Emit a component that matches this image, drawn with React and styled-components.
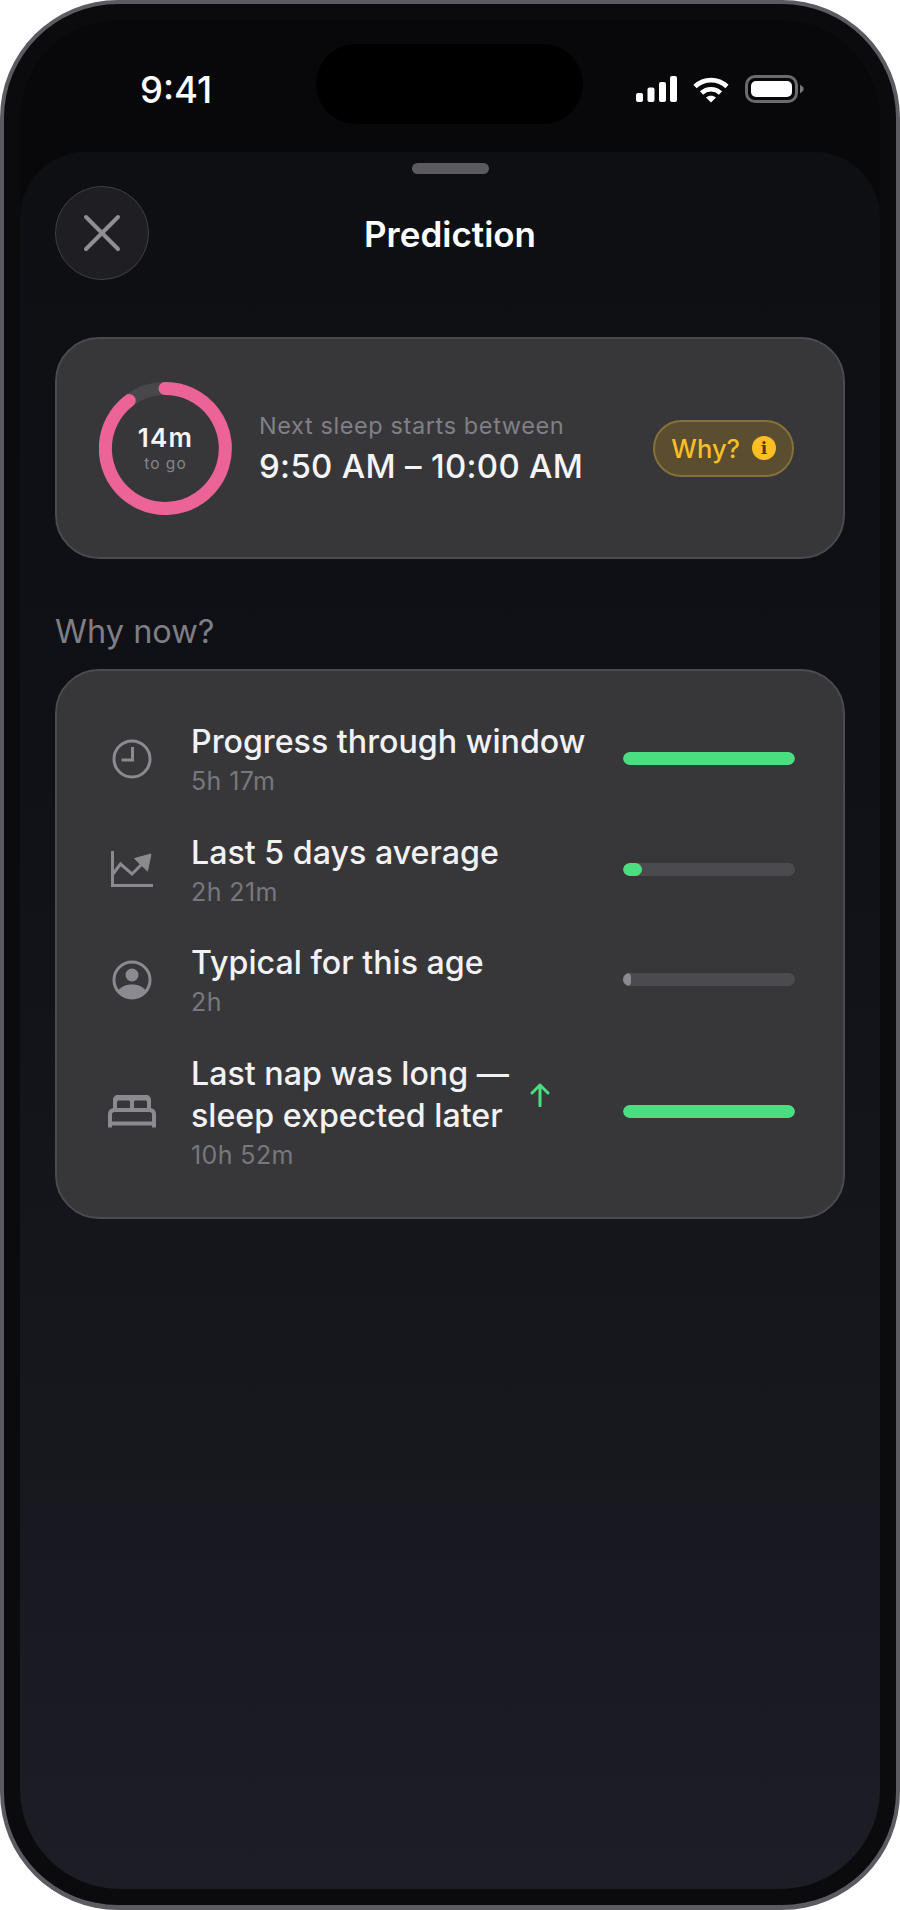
import styled, { createGlobalStyle } from 'styled-components'

const GlobalStyle = createGlobalStyle`
  html, body {
    margin: 0;
    padding: 0;
    background: #fff;
  }
  body {
    font-family: Inter, "Noto Sans", sans-serif;
    -webkit-font-smoothing: antialiased;
  }
`

const Phone = styled.div`
  box-sizing: border-box;
  width: 900px;
  height: 1910px;
  padding: 16px 16px 16px;
  border: 4px solid #5b5b61;
  border-bottom-width: 5px;
  border-radius: 118px;
  background: #0b0b0d;
`
const Screen = styled.div`
  display: flex;
  flex-direction: column;
  height: 100%;
  border-radius: 100px;
  background: #08080b;
  overflow: hidden;
`
const StatusBar = styled.div`
  flex: none;
  display: flex;
  align-items: flex-start;
  height: 132px;
  padding: 24px 75px 0 120px;
  box-sizing: border-box;
`
const Time = styled.div`
  width: 178px;
  margin-top: 26px;
  font-size: 36.5px;
  line-height: 40px;
  font-weight: 500;
  color: #fff;
`
const Island = styled.div`
  flex: none;
  width: 267px;
  height: 80px;
  border-radius: 40px;
  background: #000;
`
const StatusIcons = styled.div`
  display: flex;
  align-items: center;
  gap: 16px;
  margin: 31px 0 0 53px;
`
const Sheet = styled.div`
  flex: 1;
  display: flex;
  flex-direction: column;
  padding: 11px 35px 0;
  border-radius: 66px 66px 0 0;
  background: linear-gradient(180deg, #0e0f13 0%, #101117 35%, #14151b 58%, #1c1d25 100%);
`
const Handle = styled.div`
  align-self: center;
  width: 77px;
  height: 11px;
  border-radius: 6px;
  background: #5a5a60;
`
const Header = styled.div`
  display: grid;
  grid-template-columns: 94px 1fr 94px;
  align-items: center;
  margin-top: 12px;
  margin-bottom: 57px;
`
const CloseButton = styled.div`
  box-sizing: border-box;
  display: flex;
  align-items: center;
  justify-content: center;
  width: 94px;
  height: 94px;
  border: 1.5px solid #3f3f45;
  border-radius: 50%;
  background: #1e1e23;
`
const Title = styled.div`
  padding-top: 1px;
  text-align: center;
  font-size: 35px;
  line-height: 40px;
  font-weight: 600;
  color: #fff;
`
const Card = styled.div`
  box-sizing: border-box;
  width: 790px;
  border: 2px solid #4b4b4f;
  border-radius: 44px;
  background: #37373a;
`
const PredictionCard = styled(Card)`
  display: flex;
  align-items: center;
  height: 222px;
  padding: 0 49px 0 42px;
`
const Ring = styled.div`
  flex: none;
  display: grid;
  width: 133px;
  height: 133px;
  & > * {
    grid-area: 1 / 1;
  }
`
const RingLabel = styled.div`
  align-self: center;
  justify-self: center;
  text-align: center;
`
const RingValue = styled.div`
  font-size: 26px;
  line-height: 28px;
  font-weight: 600;
  letter-spacing: 1.2px;
  color: #f5f5f7;
`
const RingCaption = styled.div`
  margin-top: 3px;
  font-size: 15.5px;
  line-height: 18px;
  letter-spacing: 1px;
  color: #85858b;
`
const Window = styled.div`
  margin-left: 27px;
`
const WindowLabel = styled.div`
  font-size: 23.5px;
  line-height: 30px;
  letter-spacing: 0.6px;
  color: #808086;
`
const WindowValue = styled.div`
  margin-top: 5px;
  font-size: 33px;
  line-height: 40px;
  font-weight: 500;
  letter-spacing: 0.3px;
  color: #f5f5f7;
`
const WhyPill = styled.div`
  box-sizing: border-box;
  display: flex;
  align-items: center;
  gap: 12px;
  height: 57px;
  margin-left: auto;
  padding: 0 16px 0 16px;
  border: 2px solid #85703a;
  border-radius: 29px;
  background: #5a4d30;
  font-size: 25.5px;
  font-weight: 500;
  color: #fbbf24;
`
const InfoDot = styled.span`
  display: flex;
  align-items: center;
  justify-content: center;
  width: 24px;
  height: 24px;
  border-radius: 50%;
  background: #fbbf24;
  font-family: "DejaVu Serif", "Liberation Serif", serif;
  font-size: 17px;
  font-weight: 700;
  color: #4a3d1c;
`
const SectionTitle = styled.div`
  margin: 51px 0 15px;
  font-size: 32.5px;
  line-height: 44px;
  color: #7e7e84;
`
const FactorsCard = styled(Card)`
  display: flex;
  flex-direction: column;
  gap: 35.5px;
  height: 550px;
  padding: 50px 48px 0 48px;
`
const Row = styled.div`
  display: flex;
  align-items: center;
`
const RowIcon = styled.div`
  flex: none;
  display: flex;
  justify-content: center;
  width: 54px;
  margin-right: 32px;
  color: #8a8a90;
`
const RowText = styled.div`
  flex: 1;
`
const RowTitle = styled.div`
  display: flex;
  align-items: center;
  gap: 21px;
  font-size: 32.2px;
  line-height: 42px;
  font-weight: 500;
  color: #f2f2f5;
`
const RowValue = styled.div`
  margin-top: 3px;
  font-size: 25px;
  line-height: 30px;
  letter-spacing: 0.4px;
  color: #77777d;
`
const Bar = styled.div`
  flex: none;
  width: 172px;
  height: 13px;
  border-radius: 7px;
  background: #4a4a4f;
  overflow: hidden;
`
const BarFill = styled.div`
  height: 100%;
  border-radius: 7px;
  background: ${p => p.$muted ? '#8a8a90' : '#4ade80'};
`

const CloseIcon = () => (
    <svg width="38" height="38" viewBox="0 0 38 38" fill="none" stroke="#8e8e94" strokeWidth="4" strokeLinecap="round">
        <path d="M3 3 35 35M35 3 3 35"/>
    </svg>
)

const SignalIcon = () => (
    <svg width="41" height="26" viewBox="0 0 41 26" fill="#fff">
        <rect x="0" y="17" width="7" height="9" rx="2"/>
        <rect x="11.5" y="11.5" width="7" height="14.5" rx="2"/>
        <rect x="23" y="6" width="7" height="20" rx="2"/>
        <rect x="34" y="0" width="7" height="26" rx="2"/>
    </svg>
)

const WifiIcon = () => (
    <svg width="36" height="27" viewBox="0 0 36 27" fill="none" stroke="#fff" strokeWidth="4.6">
        <path d="M2 10.5C11 2 25 2 34 10.5"/>
        <path d="M8.5 17C14 12 22 12 27.5 17"/>
        <path d="M13 21.5 18 26.5 23 21.5C20 19 16 19 13 21.5Z" fill="#fff" stroke="none"/>
    </svg>
)

const BatteryIcon = () => (
    <svg width="60" height="28" viewBox="0 0 60 28" fill="none">
        <rect x="1.5" y="1.5" width="50" height="25" rx="8.5" stroke="#6b6b6f" strokeWidth="3"/>
        <rect x="6" y="6" width="41" height="16" rx="5" fill="#fff"/>
        <path d="M55 9.5 58.500 12.500V15.500L55 18.500Z" fill="#77777b"/>
    </svg>
)

const ProgressRing = () => (
    <svg width="133" height="133" viewBox="0 0 133 133" fill="none" strokeWidth="13">
        <circle cx="66.500" cy="66.500" r="60" stroke="#48484b"/>
        <path d="M 66 6.500 A 60 60 0 1 1 30.200 18.600" stroke="#ec6497" strokeLinecap="round"/>
    </svg>
)

const ClockIcon = () => (
    <svg width="40" height="40" viewBox="0 0 40 40" fill="none" stroke="currentColor" strokeWidth="3">
        <circle cx="20" cy="20" r="18"/>
        <path d="M20.500 8V21H9.500"/>
    </svg>
)

const ChartIcon = () => (
    <svg width="42" height="36" viewBox="0 0 42 36" fill="none" stroke="currentColor" strokeWidth="3">
        <path d="M1.500 0V34.500H42"/>
        <path d="M2 23 9.500 13 21 23 31 13"/>
        <path d="M40 3 36.500 20 23.500 7.500Z" fill="currentColor" stroke="currentColor" strokeWidth="1" strokeLinejoin="round"/>
    </svg>
)

const PersonIcon = () => (
    <svg width="40" height="40" viewBox="0 0 40 40" fill="none">
        <circle cx="20" cy="20" r="18" stroke="currentColor" strokeWidth="3"/>
        <circle cx="20" cy="15" r="6.500" fill="currentColor"/>
        <path d="M6.500 30C11 25.500 15 24.500 20 24.500S29 25.500 33.500 30C30 35.500 25 38 20 38S10 35.500 6.500 30Z" fill="currentColor"/>
    </svg>
)

const BedIcon = () => (
    <svg width="48" height="33" viewBox="0 0 48 33" fill="currentColor">
        <path fillRule="evenodd" d="M5 14V5C5 2 7 0 10 0H38C41 0 43 2 43 5V14H39V7C39 6 38 5.500 37 5.500H28C27 5.500 26 6 26 7V14H22V7C22 6 21 5.500 20 5.500H11C10 5.500 9 6 9 7V14Z"/>
        <path d="M2 32.500V19C2 16 4 15 7 15H41C44 15 46 16 46 19V32.500M2 28.500H46" fill="none" stroke="currentColor" strokeWidth="4"/>
    </svg>
)

const ArrowUp = () => (
    <svg width="20" height="24" viewBox="0 0 20 24" fill="none" stroke="#4ade80" strokeWidth="3" strokeLinecap="round" strokeLinejoin="round">
        <path d="M10 23V2M2 10 10 2 18 10"/>
    </svg>
)

const factors = [
    {icon: <ClockIcon/>, title: 'Progress through window', value: '5h 17m', fill: 172},
    {icon: <ChartIcon/>, title: 'Last 5 days average', value: '2h 21m', fill: 19},
    {icon: <PersonIcon/>, title: 'Typical for this age', value: '2h', fill: 8, muted: true},
    {icon: <BedIcon/>, title: <>Last nap was long —<br/>sleep expected later</>, value: '10h 52m', fill: 172, arrow: true},
]

const App = () => {
    return (
        <Phone>
            <GlobalStyle/>
            <Screen>
                <StatusBar>
                    <Time>9:41</Time>
                    <Island/>
                    <StatusIcons>
                        <SignalIcon/>
                        <WifiIcon/>
                        <BatteryIcon/>
                    </StatusIcons>
                </StatusBar>
                <Sheet>
                    <Handle/>
                    <Header>
                        <CloseButton><CloseIcon/></CloseButton>
                        <Title>Prediction</Title>
                    </Header>
                    <PredictionCard>
                        <Ring>
                            <ProgressRing/>
                            <RingLabel>
                                <RingValue>14m</RingValue>
                                <RingCaption>to go</RingCaption>
                            </RingLabel>
                        </Ring>
                        <Window>
                            <WindowLabel>Next sleep starts between</WindowLabel>
                            <WindowValue>9:50 AM – 10:00 AM</WindowValue>
                        </Window>
                        <WhyPill>Why? <InfoDot>i</InfoDot></WhyPill>
                    </PredictionCard>
                    <SectionTitle>Why now?</SectionTitle>
                    <FactorsCard>
                        {factors.map(el => (
                            <Row key={el.value}>
                                <RowIcon>{el.icon}</RowIcon>
                                <RowText>
                                    <RowTitle>
                                        <span>{el.title}</span>
                                        {el.arrow && <ArrowUp/>}
                                    </RowTitle>
                                    <RowValue>{el.value}</RowValue>
                                </RowText>
                                <Bar>
                                    <BarFill $muted={el.muted} style={{width: el.fill}}/>
                                </Bar>
                            </Row>
                        ))}
                    </FactorsCard>
                </Sheet>
            </Screen>
        </Phone>
    )
}

export default App
